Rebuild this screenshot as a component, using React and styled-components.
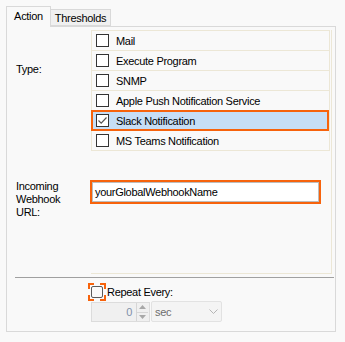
import React from 'react'
import styled, { createGlobalStyle } from 'styled-components'

const GlobalStyle = createGlobalStyle`
  html, body {
    margin: 0;
    background: #f9f9f9;
  }
  body {
    font-family: "Liberation Sans", Arial, sans-serif;
    font-size: 11px;
    letter-spacing: -0.3px;
    color: #000;
  }
  * { box-sizing: border-box; }
`

const Wrap = styled.div`
  padding: 6px 0 0 6px;
  width: 345px;
  height: 342px;
`

const TabStrip = styled.div`
  display: flex;
  align-items: flex-end;
  height: 20px;
  position: relative;
  z-index: 1;
`

const Tab = styled.div`
  display: flex;
  align-items: center;
  justify-content: center;
  border: 1px solid #d9d9d9;
  border-bottom: ${p => (p.$active ? 'none' : '1px solid #d9d9d9')};
  border-left: ${p => (p.$first ? '1px solid #d9d9d9' : 'none')};
  background: ${p => (p.$active ? '#f9f9f9' : '#f0f0f0')};
  width: ${p => p.$w}px;
  height: ${p => (p.$active ? 21 : 17)}px;
  margin-bottom: ${p => (p.$active ? -1 : 0)}px;
  padding-bottom: ${p => (p.$active ? 2 : 0)}px;
`

const Panel = styled.div`
  width: 330px;
  height: 306px;
  border: 1px solid #d9d9d9;
  padding-top: 3px;
`

const Grid = styled.div`
  display: flex;
`

const LabelCol = styled.div`
  width: 84px;
  padding-left: 9px;
  display: flex;
  flex-direction: column;
`

const Label = styled.div`
  line-height: 13px;
  margin-top: ${p => p.$top}px;
`

const Box = styled.div`
  width: 241px;
  height: 244px;
  border-right: 1px solid #ece7d6;
  border-bottom: 1px solid #ece7d6;
`

const List = styled.div`
  width: 239px;
  border: 1px solid #ece7d6;
  border-bottom: none;
`

const Row = styled.div`
  position: relative;
  height: 20px;
  display: flex;
  align-items: center;
  gap: 7px;
  padding-left: 4px;
  border-bottom: 1px solid #ece7d6;
  background: ${p => (p.$selected ? '#c6def6' : 'transparent')};

  &::after {
    content: '';
    display: ${p => (p.$selected ? 'block' : 'none')};
    position: absolute;
    left: -1px;
    right: 0;
    top: -1px;
    bottom: -1px;
    border: 2px solid #f7630c;
  }
`

const Check = styled.span`
  width: 13px;
  height: 13px;
  border: 1px solid #333;
  background: #fff;
  display: flex;
  align-items: center;
  justify-content: center;
  flex: none;
`

const UrlRing = styled.div`
  margin: 29px 0 0 -1px;
  width: 231px;
  height: 24px;
  border: 2px solid #f7630c;
`

const UrlInput = styled.div`
  height: 100%;
  border: 1px solid #bdbdbd;
  background: #fff;
  padding-left: 2px;
  display: flex;
  align-items: center;
`

const Separator = styled.div`
  margin: 3px 0 0 8px;
  width: 319px;
  height: 1px;
  background: #a0a0a0;
`

const RepeatRow = styled.div`
  display: flex;
  align-items: center;
  margin: 5px 0 0 81px;
  gap: 1px;
`

const FocusBox = styled.div`
  width: 18px;
  height: 18px;
  border: 2px dashed #f7630c;
  padding: 1px;
`

const FlatCheck = styled.div`
  width: 12px;
  height: 12px;
  border: 1px solid #5a5a5a;
  border-radius: 2px;
  background: #f9f9f9;
`

const Controls = styled.div`
  display: flex;
  gap: 1px;
  margin: 1px 0 0 84px;
`

const Spinner = styled.div`
  width: 59px;
  height: 20px;
  border: 1px solid #dcdcdc;
  background: #f0f0f0;
  display: flex;
`

const SpinValue = styled.div`
  flex: 1;
  text-align: right;
  padding-right: 4px;
  line-height: 18px;
  color: #8190ab;
`

const SpinButtons = styled.div`
  width: 12px;
  display: flex;
  flex-direction: column;
  border-left: 1px solid #d6d6d6;
  margin-right: 1px;
`

const SpinButton = styled.div`
  flex: 1;
  display: flex;
  align-items: center;
  justify-content: center;
  border-bottom: ${p => (p.$top ? '1px solid #d6d6d6' : 'none')};
`

const Select = styled.div`
  width: 71px;
  height: 21px;
  margin-top: -1px;
  border: 1px solid #e2e2e2;
  border-radius: 2px;
  background: #f4f4f4;
  display: flex;
  align-items: center;
  justify-content: space-between;
  padding: 0 3px 0 3px;
  color: #6d6d6d;
`

const types = [
  'Mail',
  'Execute Program',
  'SNMP',
  'Apple Push Notification Service',
  'Slack Notification',
  'MS Teams Notification',
]

const Tick = () => (
  <svg width="11" height="11" viewBox="0 0 11 11">
    <path d="M1.5 5.5 L4.2 8.2 L9.5 2.5" fill="none" stroke="#555" strokeWidth="1.2" />
  </svg>
)

const Arrow = ({ up }) => (
  <svg width="7" height="4" viewBox="0 0 7 4">
    <path d={up ? 'M0 4 L3.5 0 L7 4 Z' : 'M0 0 L3.5 4 L7 0 Z'} fill="#a8a8a8" />
  </svg>
)

const App = () => {
  return (
    <Wrap>
      <GlobalStyle />
      <TabStrip>
        <Tab $active $first $w={45}>Action</Tab>
        <Tab $w={60}>Thresholds</Tab>
      </TabStrip>
      <Panel>
        <Grid>
          <LabelCol>
            <Label $top={33}>Type:</Label>
            <Label $top={104}>Incoming<br />Webhook<br />URL:</Label>
          </LabelCol>
          <Box>
            <List>
              {types.map(t => (
                <Row key={t} $selected={t === 'Slack Notification'}>
                  <Check>{t === 'Slack Notification' ? <Tick /> : null}</Check>
                  {t}
                </Row>
              ))}
            </List>
            <UrlRing>
              <UrlInput>yourGlobalWebhookName</UrlInput>
            </UrlRing>
          </Box>
        </Grid>
        <Separator />
        <RepeatRow>
          <FocusBox>
            <FlatCheck />
          </FocusBox>
          Repeat Every:
        </RepeatRow>
        <Controls>
          <Spinner>
            <SpinValue>0</SpinValue>
            <SpinButtons>
              <SpinButton $top><Arrow up /></SpinButton>
              <SpinButton><Arrow /></SpinButton>
            </SpinButtons>
          </Spinner>
          <Select>
            sec
            <svg width="9" height="6" viewBox="0 0 9 6">
              <path d="M0.5 0.5 L4.5 4.5 L8.5 0.5" fill="none" stroke="#b5b5b5" strokeWidth="1" />
            </svg>
          </Select>
        </Controls>
      </Panel>
    </Wrap>
  )
}

export default App
